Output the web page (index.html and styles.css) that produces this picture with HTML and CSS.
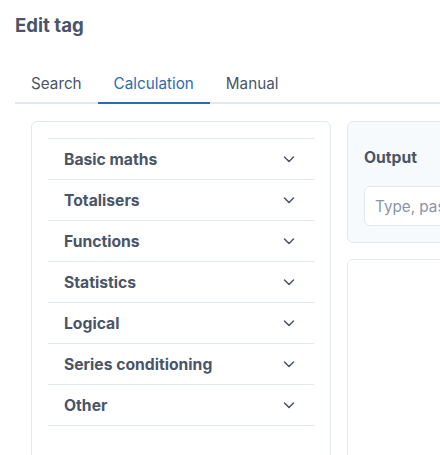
FILE: index.html
```html
<!DOCTYPE html>
<html>
<head>
<meta charset="utf-8">
<link rel="stylesheet" href="styles.css">
</head>
<body>
<div class="page">
  <h1 class="title">Edit tag</h1>
  <div class="tabs">
    <div class="tab">Search</div>
    <div class="tab active">Calculation</div>
    <div class="tab">Manual</div>
  </div>
  <div class="content">
    <div class="card left">
      <ul class="groups">
        <li class="group"><span>Basic maths</span><svg class="chev" viewBox="0 0 12 12"><path d="M1.5 4L6 8.5 10.5 4"/></svg></li>
        <li class="group"><span>Totalisers</span><svg class="chev" viewBox="0 0 12 12"><path d="M1.5 4L6 8.5 10.5 4"/></svg></li>
        <li class="group"><span>Functions</span><svg class="chev" viewBox="0 0 12 12"><path d="M1.5 4L6 8.5 10.5 4"/></svg></li>
        <li class="group"><span>Statistics</span><svg class="chev" viewBox="0 0 12 12"><path d="M1.5 4L6 8.5 10.5 4"/></svg></li>
        <li class="group"><span>Logical</span><svg class="chev" viewBox="0 0 12 12"><path d="M1.5 4L6 8.5 10.5 4"/></svg></li>
        <li class="group"><span>Series conditioning</span><svg class="chev" viewBox="0 0 12 12"><path d="M1.5 4L6 8.5 10.5 4"/></svg></li>
        <li class="group"><span>Other</span><svg class="chev" viewBox="0 0 12 12"><path d="M1.5 4L6 8.5 10.5 4"/></svg></li>
      </ul>
    </div>
    <div class="right">
      <div class="card output">
        <div class="label">Output</div>
        <input class="input" type="text" placeholder="Type, paste or select a function">
      </div>
      <div class="card editor"></div>
    </div>
  </div>
</div>
</body>
</html>
```

FILE: styles.css
```css
* { box-sizing: border-box; }
html, body { margin: 0; padding: 0; background: #fff; overflow: hidden; }
body {
  font-family: Inter, "Liberation Sans", sans-serif;
  color: #4a5568;
  width: 440px;
  height: 455px;
}
.page {
  width: 800px;
  padding: 9px 15px 0 15px;
}
.title {
  margin: 0;
  font-size: 18.6px;
  line-height: 32px;
  font-weight: 700;
  color: #4a5568;
}
.tabs {
  display: flex;
  margin-top: 24px;
  border-bottom: 2px solid #e2e8f0;
}
.tab {
  padding: 0 16px;
  height: 39px;
  line-height: 37px;
  font-size: 15.25px;
  color: #4a5568;
  margin-bottom: -2px;
  border-bottom: 2px solid transparent;
}
.tab.active {
  color: #2b6cb0;
  border-bottom-color: #2b6cb0;
}
.content {
  display: grid;
  grid-template-columns: 300px 1fr;
  gap: 16px;
  padding: 17px 16px 0 16px;
}
.card {
  border: 1px solid #e2e8f0;
  border-radius: 6px;
  background: #fff;
}
.left {
  padding: 16px;
  height: 400px;
}
.groups {
  list-style: none;
  margin: 0;
  padding: 0;
  border-top: 1px solid #e2e8f0;
}
.group {
  display: flex;
  align-items: center;
  justify-content: space-between;
  height: 41px;
  padding: 0 19px 0 16px;
  border-bottom: 1px solid #e2e8f0;
  font-size: 15.7px;
  font-weight: 700;
}
.chev {
  width: 12px;
  height: 12px;
  fill: none;
  stroke: #4a5568;
  stroke-width: 1.5;
  stroke-linecap: round;
  stroke-linejoin: round;
}
.right {
  display: flex;
  flex-direction: column;
  gap: 16px;
}
.output {
  background: #f7fafc;
  padding: 16px;
  height: 122px;
}
.label {
  font-size: 15.7px;
  font-weight: 700;
  line-height: 24px;
  margin: 8px 0 16px 0;
}
.input {
  display: block;
  width: 100%;
  height: 40px;
  border: 1px solid #e2e8f0;
  border-radius: 6px;
  background: #fff;
  padding: 0 10px;
  font-family: Inter, "Liberation Sans", sans-serif;
  font-size: 15.25px;
  color: #4a5568;
  outline: none;
}
.input::placeholder { color: #8a94a6; }
.editor {
  height: 300px;
}
```
